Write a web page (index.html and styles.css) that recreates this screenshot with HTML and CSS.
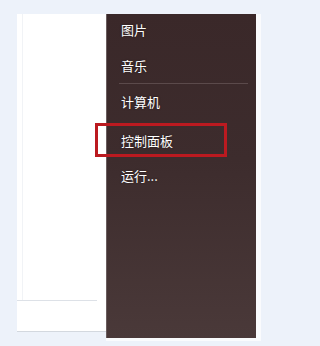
FILE: index.html
```html
<!DOCTYPE html>
<html lang="zh-CN">
<head>
<meta charset="utf-8">
<title>开始菜单</title>
<link rel="stylesheet" href="styles.css">
</head>
<body>
<div class="screen">
  <div class="pane">
    <div class="pane-body"><div class="pane-inner"></div></div>
    <div class="pane-foot"></div>
  </div>
  <div class="menu-frame">
    <ul class="menu">
      <li class="item item-first">图片</li>
      <li class="item">音乐</li>
      <li class="sep"></li>
      <li class="item item-computer">计算机</li>
      <li class="item item-control"><span class="mark"></span>控制面板</li>
      <li class="item item-run">运行...</li>
    </ul>
  </div>
</div>
</body>
</html>
```
FILE: styles.css
```css
html, body {
  margin: 0;
  padding: 0;
}
body {
  width: 276px;
  height: 346px;
  overflow: hidden;
  background: #edf2fa;
  font-family: "Noto Sans CJK SC", "Noto Sans", sans-serif;
}
.screen {
  display: flex;
  align-items: flex-start;
  padding: 14px 0 0 17px;
}
.pane {
  width: 89px;
  background: #ffffff;
}
.pane-body {
  width: 80px;
  height: 286px;
  border-bottom: 1px solid #dde1e7;
}
.pane-inner {
  margin-left: 5px;
  height: 100%;
  border-left: 1px solid #f1f3f6;
}
.pane-foot {
  height: 30px;
  border-bottom: 1px solid #d3d8df;
}
.menu-frame {
  background: #fafbfd;
  padding: 0 5px 3px 0;
}
.menu {
  list-style: none;
  margin: 0;
  padding: 0;
  width: 150px;
  height: 324px;
  box-sizing: border-box;
  border-left: 1px solid #6a5d5e;
  background: linear-gradient(180deg, #3a2829 0%, #3d2c2d 45%, #4a3939 100%);
  color: #ffffff;
  font-size: 13px;
}
.item {
  position: relative;
  height: 36px;
  display: flex;
  align-items: center;
  padding-left: 14px;
  box-sizing: border-box;
  text-shadow: 0 0 2px rgba(0, 0, 0, 0.5);
}
.item-first {
  height: 33px;
  padding-bottom: 3px;
}
.item-computer {
  height: 34px;
}
.item-control {
  height: 44px;
}
.item-run {
  height: 26px;
}
.sep {
  height: 1px;
  margin: 0 8px 0 12px;
  background: #5b4a4b;
}
.mark {
  position: absolute;
  left: -12px;
  top: 5px;
  width: 132px;
  height: 34px;
  box-sizing: border-box;
  border: 3px solid #bb1a20;
}
```
